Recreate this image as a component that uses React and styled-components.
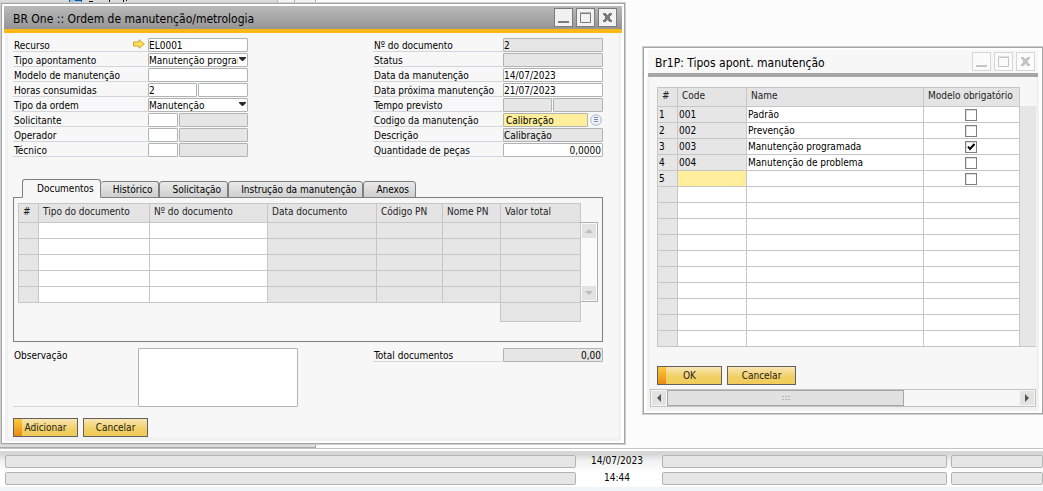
import React from "react";
import styled, { createGlobalStyle, css } from "styled-components";

const Global = createGlobalStyle`
  *, *::before, *::after { box-sizing: border-box; }
  body { margin: 0; background: #fcfcfc; }
  body, button, input, select, textarea {
    font-family: "DejaVu Sans Condensed", "Open Sans", sans-serif;
    font-size: 10px;
    color: #000;
  }
  button, input, select, textarea { margin: 0; padding: 0; }
`;

const Screen = styled.div`
  display: flex;
  flex-direction: column;
  min-height: 100vh;
  overflow: hidden;
`;

const Desktop = styled.main`
  position: relative;
  flex: 1;
  display: grid;
  grid-template-columns: 626fr 401fr;
  column-gap: 16px;
  align-items: start;
  padding-top: 2px;
`;

const BackWindow = styled.div`
  position: absolute;
  inset: 0 auto 0 0;
  width: 316px;
  overflow: hidden;
  background: #dcdcdc;
  border: solid #a9a9a9;
  border-width: 0 1px 1px 0;
  svg { display: block; }
`;

const Window = styled.section`
  position: relative;
  border: 1px solid #cfcfcf;
  background: #fff;
  margin-top: ${(p) => (p.$lower ? "44px" : "0")};
  margin-right: ${(p) => (p.$lower ? "-1px" : "0")};
`;

const Frame = styled.div`
  border: 1px solid #a5a5a5;
  padding: 2px;
`;

const TitleBar = styled.header`
  display: flex;
  align-items: center;
  justify-content: space-between;
  height: 27px;
  ${(p) =>
    p.$active
      ? css`
          padding: 0 5px 0 9px;
          background: linear-gradient(#bababa, #959595);
          border-bottom: 4px solid #fdb813;
        `
      : css`
          margin: 0 2px;
          padding: 0 3px 0 7px;
          background: #f7f7f7;
          border-bottom: 4px solid #a6a6a6;
        `}
`;

const Title = styled.h1`
  margin: 0;
  padding-top: 3px;
  font-size: 12px;
  line-height: 20px;
  font-weight: 400;
  white-space: nowrap;
`;

const WindowControls = styled.div`
  display: flex;
  gap: 3px;
`;

const ControlButton = styled.button`
  width: 19px;
  height: 19px;
  border: 1px solid ${(p) => (p.$active ? "#7c7c7c" : "#d6d6d6")};
  background: ${(p) => (p.$active ? "#f1f1f1" : "#fbfbfb")};
  color: ${(p) => (p.$active ? "#7c7c7c" : "#c4c4c4")};
  svg { display: block; }
`;

const Body = styled.div`
  margin: 0 1px;
  border: solid #f1f1f1;
  border-width: 0 3px 4px;
  background: #f7f7f7;
  padding: ${(p) => (p.$list ? "10px 0 0" : "5px 15px 0 5px")};
`;

const Columns = styled.div`
  display: flex;
  justify-content: space-between;
  align-items: flex-start;
`;

const FieldColumn = styled.div`
  display: grid;
  row-gap: 1px;
  width: ${(p) => (p.$wide ? "235px" : "230px")};
`;

const FieldRow = styled.div`
  display: flex;
  height: 14px;
`;

const Label = styled.label`
  flex: 1;
  display: flex;
  justify-content: space-between;
  align-items: flex-start;
  padding-left: 1px;
  border-bottom: 1px solid #d2d6da;
  line-height: 15px;
  white-space: nowrap;
  svg { display: block; margin: 1px 3px 0 0; }
`;

const Inputs = styled.div`
  display: flex;
  align-items: center;
  gap: 1px;
  width: 100px;
`;

const fieldBox = css`
  min-width: 0;
  height: 14px;
  border: 1px solid #b2b4b4;
  border-radius: 1px;
  outline: 0;
  background: ${(p) => (p.$off ? "#e6e6e6" : p.$hot ? "#ffee9b" : "#fff")};
`;

const TextInput = styled.input`
  ${fieldBox}
  flex: ${(p) => p.$grow || 1} 1 0;
  padding: 0 ${(p) => (p.$right ? "1px" : "0")} 0 ${(p) => (p.$hot ? "2px" : "0")};
  text-align: ${(p) => (p.$right ? "right" : "left")};
`;

const SelectWrap = styled.div`
  position: relative;
  flex: 1;
  display: flex;
  svg { position: absolute; right: 2px; top: 4px; pointer-events: none; }
`;

const Select = styled.select`
  ${fieldBox}
  width: 100%;
  appearance: none;
  padding: 1px 9px 0 0;
  line-height: 11px;
  text-overflow: clip;
`;

const ChooseButton = styled.button`
  width: 14px;
  height: 12px;
  border: 0;
  background: none;
  svg { display: block; margin: 0 auto; }
`;

const Tabs = styled.div`
  display: flex;
  align-items: flex-end;
  margin: 22px 0 -1px 9px;
  position: relative;
`;

const Tab = styled.button`
  height: ${(p) => (p.$active ? "19px" : "17px")};
  padding: 1px 6px 0 ${(p) => (p.$active ? "14px" : "12px")};
  border: 1px solid #7f7f7f;
  border-left-width: ${(p) => (p.$inner ? "0" : "1px")};
  border-bottom-color: ${(p) => (p.$active ? "#f7f7f7" : "#7f7f7f")};
  border-radius: 3px 3px 0 0;
  background: ${(p) => (p.$active ? "#f7f7f7" : "linear-gradient(#e9e9e9, #cfcfcf)")};
  line-height: 14px;
  white-space: nowrap;
`;

const TabPanel = styled.div`
  height: 145px;
  border: 1px solid #7f7f7f;
  padding: 5px 4px;
  display: flex;
  align-items: flex-start;
`;

const Table = styled.table`
  flex: 1;
  width: 100%;
  table-layout: fixed;
  border-collapse: collapse;
`;

const HeadCell = styled.th`
  height: 19px;
  border: 1px solid #c6c6c6;
  background: #e4e4e4;
  padding: 0 0 2px 4px;
  color: #222;
  font-weight: 400;
  line-height: 14px;
  text-align: left;
  white-space: nowrap;
`;

const Cell = styled.td`
  height: ${(p) => (p.$total ? "19px" : "16px")};
  border: ${(p) => (p.$blank ? "0" : "1px solid #c6c6c6")};
  background: ${(p) => (p.$blank ? "transparent" : p.$off ? "#e6e6e6" : p.$hot ? "#ffee9b" : "#fff")};
  padding: ${(p) => (p.$center ? "0 2px 0 0" : "0 0 0 1px")};
  text-align: ${(p) => (p.$center ? "center" : "left")};
  line-height: 14px;
  white-space: nowrap;
`;

const CheckWrap = styled.span`
  display: grid;
  place-items: center;
  > * { grid-area: 1 / 1; }
  svg { pointer-events: none; z-index: 1; }
`;

const Check = styled.input`
  appearance: none;
  width: 12px;
  height: 12px;
  border: 1px solid #808080;
  background: #fff;
  box-shadow: inset 1px 1px 0 #dcdcdc;
`;

const VScroll = styled.div`
  display: flex;
  flex-direction: column;
  justify-content: space-between;
  width: 17px;
  height: 80px;
  margin-top: 19px;
  padding: 1px;
  border: 1px solid #b0b0b0;
  border-left: 0;
  background: #fafafa;
`;

const ScrollButton = styled.button`
  width: 14px;
  height: 14px;
  border: 0;
  background: #e2e2e2;
  svg { display: block; margin: 0 auto; }
`;

const BottomFields = styled(Columns)`
  margin-top: 6px;
`;

const NoteRow = styled.div`
  display: flex;
  width: 285px;
  height: 59px;
`;

const Note = styled.textarea`
  width: 160px;
  height: 59px;
  border: 1px solid #b2b4b4;
  border-radius: 1px;
  resize: none;
  outline: 0;
`;

const Actions = styled.div`
  display: flex;
  gap: 5px;
  margin: ${(p) => (p.$list ? "19px 0 4px 7px" : "11px 0 0")};
`;

const ActionButton = styled.button`
  width: ${(p) => (p.$wide ? "69px" : "65px")};
  height: 19px;
  border: 1px solid #62615f;
  background: ${(p) => (p.$primary ? "linear-gradient(#fccb3f, #ea8a12) 0 0 / 8px 100% no-repeat, " : "")}
    linear-gradient(#f8e6b4, #f2cf63 60%, #f0cc5a);
  color: #222;
  line-height: 15px;
`;

const ListArea = styled.div`
  display: flex;
  align-items: flex-end;
  padding-left: 7px;
`;

const Trough = styled.div`
  width: 16px;
  height: 241px;
  background: #e6e6e6;
  border-bottom: 1px solid #c6c6c6;
`;

const HScroll = styled.div`
  display: flex;
  align-items: center;
  height: 18px;
  padding: 0 1px;
  border: 1px solid #c3c3b8;
  background: #f7f7f7;
`;

const Thumb = styled.div`
  width: 237px;
  height: 16px;
  margin: 0 auto 0 1px;
  border: 1px solid #a6a6a6;
  background: #e1e1e1;
  display: grid;
  place-items: center;
`;

const StatusBar = styled.footer`
  display: grid;
  grid-template-columns: 571fr 78px 285fr 92fr;
  column-gap: 4px;
  row-gap: 4px;
  height: 43px;
  padding: 6px 0 6px 5px;
  border-top: 1px solid #c4c4c4;
  background: linear-gradient(#fff 2px, #d6d6d6 2px, #d6d6d6 5px, #f2f2f2 12px, #fff 24px, #fff 38px, #eff4f9 38px);
`;

const StatusField = styled.div`
  height: 13px;
  border: 1px solid #b2b4b4;
  border-radius: 2px;
  background: #e6e6e6;
`;

const StatusText = styled.time`
  height: 13px;
  padding-right: 4px;
  line-height: 12px;
  text-align: center;
`;

const LinkArrow = () => (
  <svg width="12" height="10" viewBox="0 0 12 10" aria-hidden="true">
    <path d="M.5 3h5.500V.8L11.300 5 6 9.200V7H.5z" fill="#ffe05a" stroke="#cfa52c" />
  </svg>
);

const Caret = () => (
  <svg width="7" height="4" viewBox="0 0 7 4" aria-hidden="true">
    <path d="M0 0h7v1L4 4H3L0 1z" fill="#2b2b33" />
  </svg>
);

const Tri = ({ dir, color }) => {
  const d = {
    up: "M0 6 4 2l4 4z",
    down: "M0 2h8L4 6z",
    left: "M6 0v8L2 4z",
    right: "M2 0v8l4-4z",
  }[dir];
  return (
    <svg width="8" height="8" viewBox="0 0 8 8" aria-hidden="true">
      <path d={d} fill={color} />
    </svg>
  );
};

const Controls = ({ active }) => (
  <WindowControls>
    <ControlButton type="button" $active={active} aria-label="Minimizar">
      <svg width="17" height="17"><path d="M3 13h11" stroke="currentColor" strokeWidth="2" /></svg>
    </ControlButton>
    <ControlButton type="button" $active={active} aria-label="Maximizar">
      <svg width="17" height="17"><path d="M3.500 4.500h10v9h-10zM3 4h11" fill="none" stroke="currentColor" /></svg>
    </ControlButton>
    <ControlButton type="button" $active={active} aria-label="Fechar">
      <svg width="17" height="17">
        <path d="M4 4h3v1h1v1h1V5h1V4h3v2h-1v1h-1v3h1v1h1v2h-3v-1H9v-1H8v1H7v1H4v-2h1v-1h1V7H5V6H4z" fill="currentColor" />
      </svg>
    </ControlButton>
  </WindowControls>
);

const Row = ({ id, label, link, children }) => (
  <FieldRow>
    <Label htmlFor={id}>{label}{link && <LinkArrow />}</Label>
    <Inputs>{children}</Inputs>
  </FieldRow>
);

const DropDown = ({ id, value }) => (
  <SelectWrap>
    <Select id={id} defaultValue={value}><option>{value}</option></Select>
    <Caret />
  </SelectWrap>
);

const tabs = ["Documentos", "Histórico", "Solicitação", "Instrução da manutenção", "Anexos"];
const docColumns = [
  ["#", 20], ["Tipo do documento", 111], ["Nº do documento", 118], ["Data documento", 109],
  ["Código PN", 66], ["Nome PN", 58], ["Valor total", 80],
];
const types = [
  ["001", "Padrão"], ["002", "Prevenção"], ["003", "Manutenção programada", true],
  ["004", "Manutenção de problema"], ["", ""],
];
const typeColumns = [["#", 20], ["Code", 69], ["Name", 177], ["Modelo obrigatório", 96]];

const Cols = ({ columns }) => {
  const total = columns.reduce((sum, c) => sum + c[1], 0);
  return (
    <colgroup>
      {columns.map(([name, w]) => <col key={name} style={{ width: `${(w / total) * 100}%` }} />)}
    </colgroup>
  );
};

const OrderWindow = () => (
  <Window>
    <Frame>
      <TitleBar $active>
        <Title>BR One :: Ordem de manutenção/metrologia</Title>
        <Controls active />
      </TitleBar>
      <Body>
        <Columns>
          <FieldColumn $wide>
            <Row id="recurso" label="Recurso" link><TextInput id="recurso" defaultValue="EL0001" /></Row>
            <Row id="apont" label="Tipo apontamento"><DropDown id="apont" value="Manutenção programada" /></Row>
            <Row id="modelo" label="Modelo de manutenção"><TextInput id="modelo" /></Row>
            <Row id="horas" label="Horas consumidas">
              <TextInput id="horas" $grow={49} defaultValue="2" />
              <TextInput aria-label="Minutos consumidos" $grow={50} />
            </Row>
            <Row id="ordem" label="Tipo da ordem"><DropDown id="ordem" value="Manutenção" /></Row>
            {["Solicitante", "Operador", "Técnico"].map((name) => (
              <Row key={name} id={name} label={name}>
                <TextInput id={name} $grow={29} />
                <TextInput aria-label={`Nome ${name}`} $grow={70} $off readOnly />
              </Row>
            ))}
          </FieldColumn>
          <FieldColumn>
            <Row id="numero" label="Nº do documento"><TextInput id="numero" $off readOnly defaultValue="2" /></Row>
            <Row id="status" label="Status"><TextInput id="status" $off readOnly /></Row>
            <Row id="data" label="Data da manutenção"><TextInput id="data" defaultValue="14/07/2023" /></Row>
            <Row id="proxima" label="Data próxima manutenção"><TextInput id="proxima" defaultValue="21/07/2023" /></Row>
            <Row id="tempo" label="Tempo previsto">
              <TextInput id="tempo" $grow={49} $off readOnly />
              <TextInput aria-label="Minutos previstos" $grow={50} $off readOnly />
            </Row>
            <Row id="codigo" label="Codigo da manutenção">
              <TextInput id="codigo" $hot defaultValue="Calibração" />
              <ChooseButton type="button" aria-label="Escolher">
                <svg width="12" height="12" viewBox="0 0 12 12">
                  <circle cx="6" cy="6" r="5.300" fill="#eef1f8" stroke="#a9b4cc" />
                  <path d="M4 3.500h4M4 5.500h4M4 7.500h4" stroke="#7b88a8" />
                </svg>
              </ChooseButton>
            </Row>
            <Row id="descricao" label="Descrição"><TextInput id="descricao" $off readOnly defaultValue="Calibração" /></Row>
            <Row id="pecas" label="Quantidade de peças"><TextInput id="pecas" $right defaultValue="0,0000" /></Row>
          </FieldColumn>
        </Columns>

        <Tabs role="tablist">
          {tabs.map((name, i) => (
            <Tab key={name} type="button" role="tab" aria-selected={i === 0} $active={i === 0} $inner={i === 1}>{name}</Tab>
          ))}
        </Tabs>
        <TabPanel role="tabpanel">
          <Table>
            <Cols columns={docColumns} />
            <thead><tr>{docColumns.map(([name]) => <HeadCell key={name}>{name}</HeadCell>)}</tr></thead>
            <tbody>
              {[0, 1, 2, 3, 4].map((r) => (
                <tr key={r}>{docColumns.map(([name], c) => <Cell key={name} $off={c !== 1 && c !== 2} />)}</tr>
              ))}
              <tr><Cell $blank colSpan={6} /><Cell $off $total /></tr>
            </tbody>
          </Table>
          <VScroll>
            <ScrollButton type="button" aria-label="Acima"><Tri dir="up" color="#bdbdbd" /></ScrollButton>
            <ScrollButton type="button" aria-label="Abaixo"><Tri dir="down" color="#bdbdbd" /></ScrollButton>
          </VScroll>
        </TabPanel>

        <BottomFields>
          <NoteRow><Label htmlFor="obs">Observação</Label><Note id="obs" /></NoteRow>
          <FieldColumn>
            <Row id="total" label="Total documentos"><TextInput id="total" $off $right readOnly defaultValue="0,00" /></Row>
          </FieldColumn>
        </BottomFields>
        <Actions>
          <ActionButton type="button" $primary>Adicionar</ActionButton>
          <ActionButton type="button">Cancelar</ActionButton>
        </Actions>
      </Body>
    </Frame>
  </Window>
);

const TypesWindow = () => (
  <Window $lower>
    <Frame>
      <TitleBar>
        <Title>Br1P: Tipos apont. manutenção</Title>
        <Controls />
      </TitleBar>
      <Body $list>
        <ListArea>
          <Table>
            <Cols columns={typeColumns} />
            <thead><tr>{typeColumns.map(([name]) => <HeadCell key={name}>{name}</HeadCell>)}</tr></thead>
            <tbody>
              {Array.from({ length: 15 }, (_, i) => {
                const t = types[i];
                return (
                  <tr key={i}>
                    <Cell $off>{t && i + 1}</Cell>
                    <Cell $off={i < 4} $hot={i === 4}>{t && t[0]}</Cell>
                    <Cell>{t && t[1]}</Cell>
                    <Cell $center>
                      {t && (
                        <CheckWrap>
                          <Check type="checkbox" defaultChecked={!!t[2]} aria-label={`Modelo obrigatório ${i + 1}`} />
                          {t[2] && (
                            <svg width="8" height="8" viewBox="0 0 8 8"><path d="M1 3.500 3 6l4.500-5" fill="none" stroke="#000" strokeWidth="2" /></svg>
                          )}
                        </CheckWrap>
                      )}
                    </Cell>
                  </tr>
                );
              })}
            </tbody>
          </Table>
          <Trough />
        </ListArea>
        <Actions $list>
          <ActionButton type="button" $primary>OK</ActionButton>
          <ActionButton type="button" $wide>Cancelar</ActionButton>
        </Actions>
        <HScroll>
          <ScrollButton type="button" aria-label="Esquerda"><Tri dir="left" color="#555" /></ScrollButton>
          <Thumb>
            <svg width="8" height="6" aria-hidden="true">
              <path d="M0 1.500h2m1 0h2m1 0h2M0 4.500h2m1 0h2m1 0h2" stroke="#b4b4b4" />
            </svg>
          </Thumb>
          <ScrollButton type="button" aria-label="Direita"><Tri dir="right" color="#555" /></ScrollButton>
        </HScroll>
      </Body>
    </Frame>
  </Window>
);

export default function App() {
  return (
    <Screen>
      <Global />
      <Desktop>
        <BackWindow>
          <svg width="315" height="2" aria-hidden="true">
            <path d="M277 0h38v2h-38z" fill="#f4f4f4" />
            <path d="M69 0h13v2H69z" fill="#9cc3e4" />
            <path d="M69.500 0v2M81.500 0v2M75 .5h6" stroke="#0c5796" />
            <path d="M89 1.500h4M109.500 0v2M123.500 0v2M126.500 0v1" stroke="#000" />
            <path d="M277.500 0v2M294.500 0v2" stroke="#ababab" />
          </svg>
        </BackWindow>
        <OrderWindow />
        <TypesWindow />
      </Desktop>
      <StatusBar>
        <StatusField /><StatusText>14/07/2023</StatusText><StatusField /><StatusField />
        <StatusField /><StatusText>14:44</StatusText><StatusField /><StatusField />
      </StatusBar>
    </Screen>
  );
}
